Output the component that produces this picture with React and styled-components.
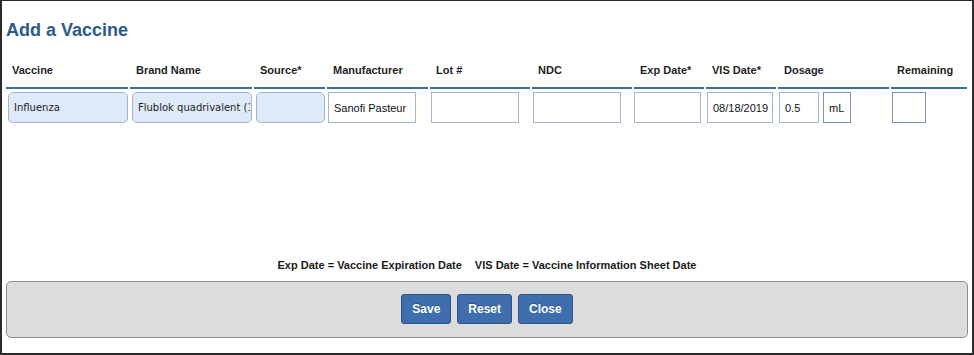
import React from "react";
import styled, { createGlobalStyle } from "styled-components";

const GlobalStyle = createGlobalStyle`
  html, body {
    margin: 0;
    padding: 0;
    background: #fff;
  }
  body {
    font-family: "Liberation Sans", Arial, Helvetica, sans-serif;
    color: #1f1f1f;
  }
`;

const Frame = styled.div`
  box-sizing: border-box;
  width: 974px;
  height: 355px;
  border: 2px solid #2b2b2b;
  border-top-width: 1px;
  padding: 18px 4px 0 4px;
  display: flex;
  flex-direction: column;
  background: #fff;
`;

const Title = styled.h2`
  margin: 0;
  font-size: 18px;
  line-height: 22px;
  font-weight: 700;
  color: #2c5a8a;
`;

const Grid = styled.div`
  display: grid;
  grid-template-columns: 122px 122px 71px 101px 100px 100px 70px 70px 111px 76px;
  column-gap: 2px;
  row-gap: 2px;
  margin-top: 17px;
`;

const HeadCell = styled.div`
  padding: 5px 6px 10px;
  font-size: 11px;
  line-height: 14px;
  font-weight: 700;
  color: #1f1f1f;
  border-bottom: 2px solid #3f6d99;
  white-space: nowrap;
`;

const Cell = styled.div`
  display: flex;
  gap: 4px;
  padding: 1px 0 0 ${(p) => (p.$pad !== undefined ? p.$pad : 1)}px;
`;

const FilledInput = styled.input`
  box-sizing: border-box;
  width: 100%;
  height: 31px;
  margin: 0;
  padding: 0 1px 0 5px;
  border: 1px solid #a3b5ca;
  border-radius: 5px;
  background: #dfeaf8;
  font-family: "DejaVu Sans", "Liberation Sans", sans-serif;
  font-size: 10px;
  color: #222;
  outline: none;
`;

const TextInput = styled.input`
  box-sizing: border-box;
  width: ${(p) => p.$w}px;
  height: 31px;
  margin: 0;
  padding: 0 2px 0 5px;
  border: 1px solid ${(p) => (p.$dark ? "#7a93b1" : "#a2b6cd")};
  border-radius: 0;
  background: #fff;
  font-family: "Liberation Sans", Arial, sans-serif;
  font-size: 11px;
  color: #111;
  outline: none;
`;

const Note = styled.div`
  margin-top: 135px;
  display: flex;
  justify-content: center;
  gap: 13px;
  font-size: 11px;
  line-height: 14px;
  font-weight: 700;
  color: #1a1a1a;
`;

const Panel = styled.div`
  box-sizing: border-box;
  margin-top: 9px;
  height: 57px;
  padding-bottom: 1px;
  border: 1px solid #8e8e8e;
  border-radius: 5px;
  background: #dcdcdc;
  display: flex;
  justify-content: center;
  align-items: center;
  gap: 6px;
`;

const Button = styled.button`
  box-sizing: border-box;
  height: 30px;
  padding: 0 10px;
  border: 1px solid #2b5587;
  border-radius: 3px;
  background: #3e6eae;
  color: #fff;
  font-family: "Liberation Sans", Arial, sans-serif;
  font-size: 12px;
  font-weight: 700;
  text-shadow: 0 -1px 0 rgba(0, 0, 0, 0.25);
  cursor: pointer;
`;

const headers = [
  "Vaccine",
  "Brand Name",
  "Source*",
  "Manufacturer",
  "Lot #",
  "NDC",
  "Exp Date*",
  "VIS Date*",
  "Dosage",
  "Remaining",
];

export default function App() {
  return (
    <>
      <GlobalStyle />
      <Frame>
        <Title>Add a Vaccine</Title>
        <Grid>
          {headers.map((h) => (
            <HeadCell key={h}>{h}</HeadCell>
          ))}

          <Cell $pad={2}>
            <FilledInput readOnly defaultValue="Influenza" />
          </Cell>
          <Cell $pad={2}>
            <FilledInput readOnly defaultValue="Flublok quadrivalent (18 years and older)" />
          </Cell>
          <Cell $pad={2}>
            <FilledInput readOnly defaultValue="" />
          </Cell>
          <Cell>
            <TextInput $w={88} defaultValue="Sanofi Pasteur" />
          </Cell>
          <Cell>
            <TextInput $w={88} defaultValue="" />
          </Cell>
          <Cell>
            <TextInput $w={88} defaultValue="" />
          </Cell>
          <Cell $pad={0}>
            <TextInput $w={67} defaultValue="" />
          </Cell>
          <Cell>
            <TextInput $w={66} defaultValue="08/18/2019" />
          </Cell>
          <Cell>
            <TextInput $w={40} defaultValue="0.5" />
            <TextInput $w={28} $dark defaultValue="mL" />
          </Cell>
          <Cell>
            <TextInput $w={34} $dark defaultValue="" />
          </Cell>
        </Grid>

        <Note>
          <span>Exp Date = Vaccine Expiration Date</span>
          <span>VIS Date = Vaccine Information Sheet Date</span>
        </Note>

        <Panel>
          <Button type="button">Save</Button>
          <Button type="button">Reset</Button>
          <Button type="button">Close</Button>
        </Panel>
      </Frame>
    </>
  );
}
